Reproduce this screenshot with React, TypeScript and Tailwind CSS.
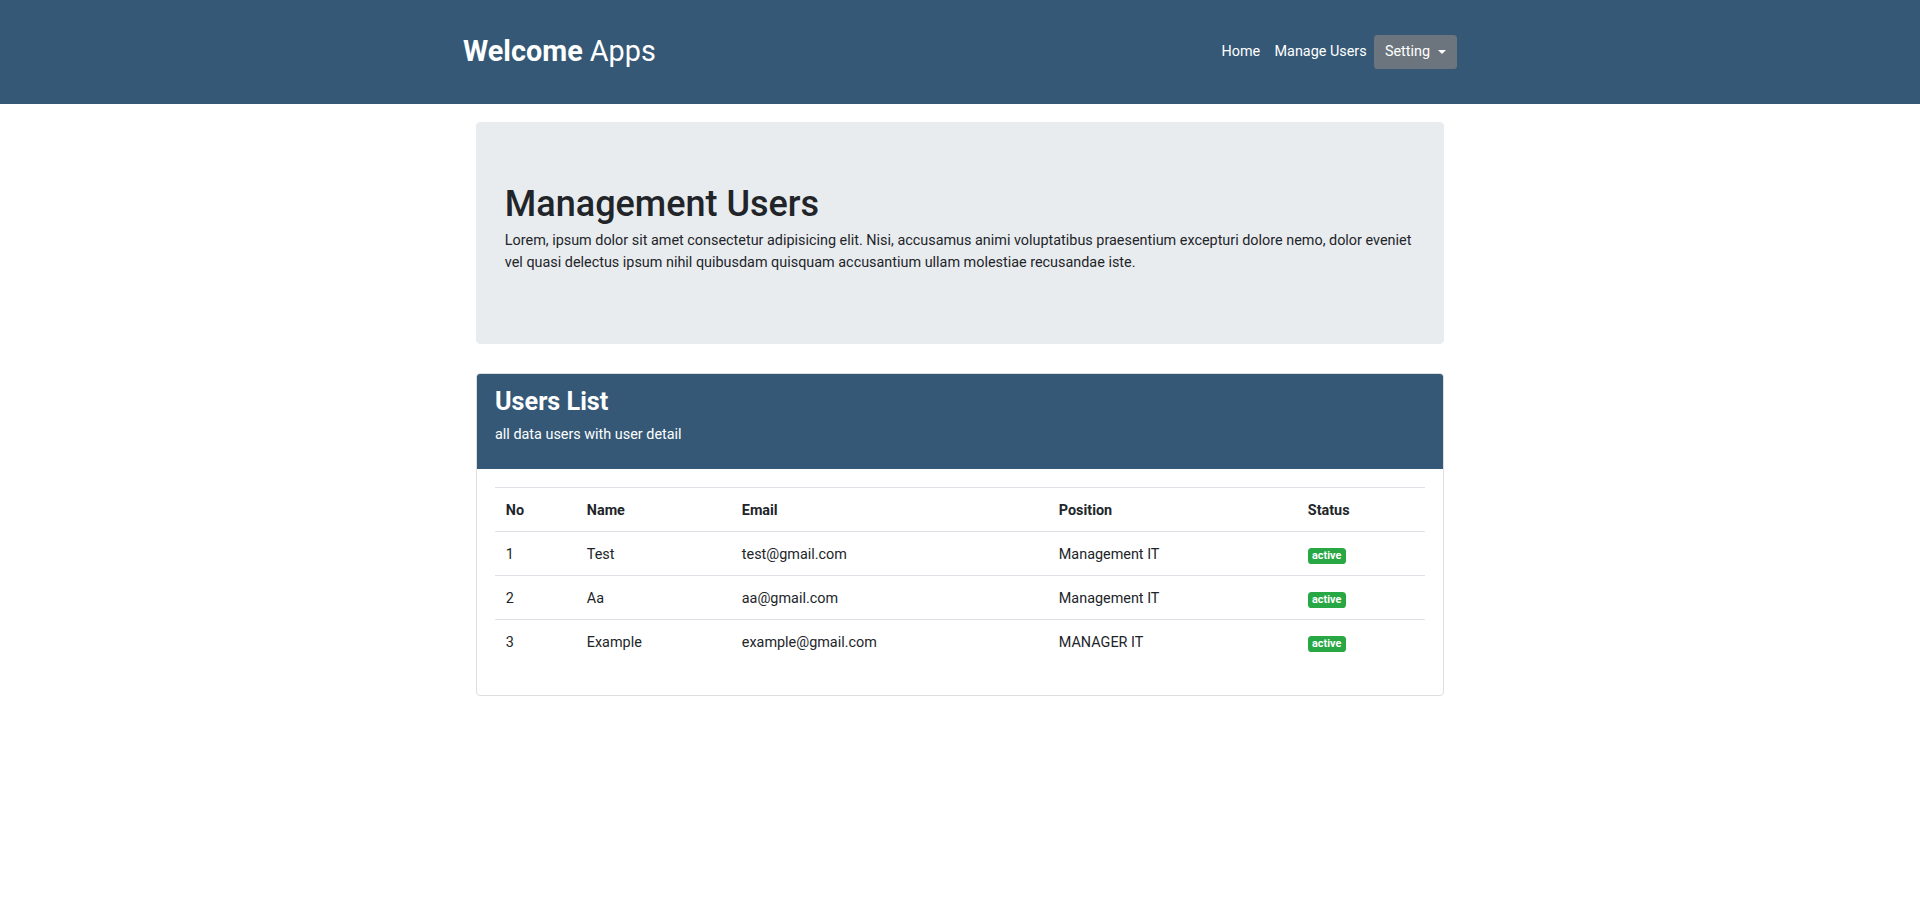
import React from "react";

const users = [
  { no: 1, name: "Test", email: "test@gmail.com", position: "Management IT" },
  { no: 2, name: "Aa", email: "aa@gmail.com", position: "Management IT" },
  { no: 3, name: "Example", email: "example@gmail.com", position: "MANAGER IT" },
];

export default function App() {
  return (
    <div className="min-h-[901px] bg-white text-[#212529] text-[14.4px] leading-[21.6px] font-['Roboto',sans-serif]">
      <nav className="h-[104px] bg-[#355876]">
        <div className="mx-auto flex h-full w-[994px] items-center justify-between">
          <div className="text-[28.8px] leading-[43.2px] text-white">
            <span className="font-bold">Welcome</span> Apps
          </div>
          <div className="flex items-center text-white">
            <span className="px-[7.2px]">Home</span>
            <span className="px-[7.2px]">Manage Users</span>
            <button className="flex h-[34px] items-center rounded-[3.6px] bg-[#6c757d] pl-[11px] pr-[11px] text-white">
              Setting
              <span className="ml-[8px] inline-block h-0 w-0 border-x-[4.3px] border-t-[4.3px] border-x-transparent border-t-white" />
            </button>
          </div>
        </div>
      </nav>

      <main className="mx-auto w-[968px] pt-[18px]">
        <section className="rounded-[4.3px] bg-[#e9ecef] px-[28.8px] pt-[60.5px] pb-[71px]">
          <h1 className="mb-[4.5px] text-[36px] font-medium leading-[43.2px]">Management Users</h1>
          <p>
            Lorem, ipsum dolor sit amet consectetur adipisicing elit. Nisi, accusamus animi voluptatibus praesentium excepturi dolore nemo, dolor eveniet vel quasi delectus ipsum nihil quibusdam quisquam accusantium ullam molestiae recusandae iste.
          </p>
        </section>

        <section className="mt-[29px] overflow-hidden rounded-[4px] border border-[#dcdfe2]">
          <div className="bg-[#355876] px-[18px] pt-[12.5px] pb-[24px] text-white">
            <h3 className="mb-[7px] text-[25.2px] font-bold leading-[30px]">Users List</h3>
            <p>all data users with user detail</p>
          </div>
          <div className="px-[18px] pt-[17.5px] pb-[32px]">
            <table className="w-full border-collapse text-left">
              <colgroup>
                <col className="w-[81px]" />
                <col className="w-[155px]" />
                <col className="w-[317px]" />
                <col className="w-[249px]" />
                <col className="w-[128px]" />
              </colgroup>
              <thead>
                <tr className="h-[44px] border-t border-[#dee2e6]">
                  <th className="px-[10.8px] pt-[3px] font-bold">No</th>
                  <th className="px-[10.8px] pt-[3px] font-bold">Name</th>
                  <th className="px-[10.8px] pt-[3px] font-bold">Email</th>
                  <th className="px-[10.8px] pt-[3px] font-bold">Position</th>
                  <th className="px-[10.8px] pt-[3px] font-bold">Status</th>
                </tr>
              </thead>
              <tbody>
                {users.map((u) => (
                  <tr key={u.no} className="h-[44px] border-t border-[#dee2e6]">
                    <td className="px-[10.8px] pt-[2px]">{u.no}</td>
                    <td className="px-[10.8px] pt-[2px]">{u.name}</td>
                    <td className="px-[10.8px] pt-[2px]">{u.email}</td>
                    <td className="px-[10.8px] pt-[2px]">{u.position}</td>
                    <td className="px-[10.8px] pt-[2px]">
                      <span className="inline-block rounded-[3.6px] bg-[#28a745] px-[4.3px] py-[2.7px] text-[10.8px] font-bold leading-[10.8px] text-white">
                        active
                      </span>
                    </td>
                  </tr>
                ))}
              </tbody>
            </table>
          </div>
        </section>
      </main>
    </div>
  );
}
